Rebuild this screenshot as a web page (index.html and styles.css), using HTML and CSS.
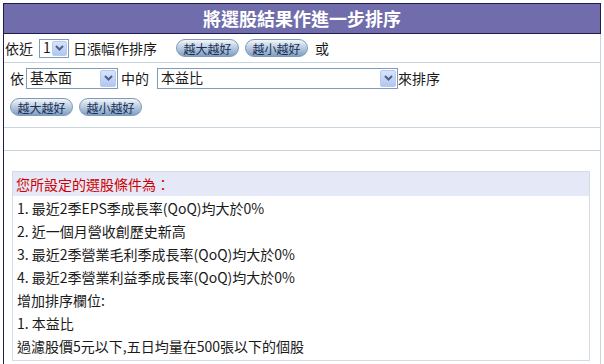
FILE: index.html
```html
<!DOCTYPE html>
<html lang="zh-Hant">
<head>
    <meta charset="UTF-8">
    <title>將選股結果作進一步排序</title>
    <link rel="stylesheet" href="styles.css">
</head>
<body>
    <div class="wrap">
        <div class="title">將選股結果作進一步排序</div>

        <div class="cell row-days">
            <span>依近</span>
            <div class="combo combo-days">
                <span class="val">1</span>
                <span class="arrow"><svg width="9" height="6" viewBox="0 0 9 6"><path d="M1 1 L4.5 4.5 L8 1" fill="none" stroke="#4d6185" stroke-width="2"/></svg></span>
            </div>
            <span class="lbl-days">日漲幅作排序</span>
            <button class="pill first">越大越好</button>
            <button class="pill">越小越好</button>
            <span class="or">或</span>
        </div>

        <div class="cell row-field">
            <div class="line">
                <span>依</span>
                <div class="combo combo-group">
                    <span class="val">基本面</span>
                    <span class="arrow"><svg width="9" height="6" viewBox="0 0 9 6"><path d="M1 1 L4.5 4.5 L8 1" fill="none" stroke="#4d6185" stroke-width="2"/></svg></span>
                </div>
                <span class="mid">中的</span>
                <div class="combo combo-item">
                    <span class="val">本益比</span>
                    <span class="arrow"><svg width="9" height="6" viewBox="0 0 9 6"><path d="M1 1 L4.5 4.5 L8 1" fill="none" stroke="#4d6185" stroke-width="2"/></svg></span>
                </div>
                <span>來排序</span>
            </div>
            <div class="btns">
                <button class="pill">越大越好</button>
                <button class="pill">越小越好</button>
            </div>
        </div>

        <div class="cell blank"></div>

        <div class="cell last">
            <div class="cond">
                <div class="cond-head">您所設定的選股條件為：</div>
                <ul class="cond-list">
                    <li>1. 最近2季EPS季成長率(QoQ)均大於0%</li>
                    <li>2. 近一個月營收創歷史新高</li>
                    <li>3. 最近2季營業毛利季成長率(QoQ)均大於0%</li>
                    <li>4. 最近2季營業利益季成長率(QoQ)均大於0%</li>
                    <li>增加排序欄位:</li>
                    <li>1. 本益比</li>
                    <li>過濾股價5元以下,五日均量在500張以下的個股</li>
                </ul>
            </div>
        </div>
    </div>
</body>
</html>
```

FILE: styles.css
```css
body {
    margin: 0;
    background: #ffffff;
    font-family: "Noto Sans CJK TC", "Liberation Sans", sans-serif;
    font-size: 14px;
    color: #1a1a1a;
}
.wrap {
    margin: 3px 0 0 3px;
    width: 597px;
    height: 361px;
    overflow: hidden;
    border-left: 1px solid #1c1c4e;
}
.title {
    height: 29px;
    line-height: 29px;
    background-color: #716dac;
    border-top: 1px solid #1c1c4e;
    border-right: 1px solid #1c1c4e;
    border-bottom: 1px solid #1c1c4e;
    color: #ffffff;
    font-size: 18px;
    font-weight: bold;
    text-align: center;
}
.cell {
    border-bottom: 1px solid #c9d5de;
    border-right: 1px solid #c9d5de;
}
.row-days {
    height: 28px;
    display: flex;
    align-items: center;
    padding-left: 1px;
}
.combo {
    display: flex;
    height: 19px;
    border: 1px solid #7f9db9;
    background: #ffffff;
    box-sizing: border-box;
}
.combo .val {
    flex: 1;
    padding-left: 3px;
    line-height: 15px;
    font-size: 14px;
}
.combo .arrow {
    width: 16px;
    margin: 1px;
    display: flex;
    align-items: center;
    justify-content: center;
    background: linear-gradient(#d9e4fb, #b1c6f2);
    border: 1px solid #b8cbef;
    border-radius: 2px;
    box-sizing: border-box;
}
.combo-days {
    width: 30px;
    margin-left: 6px;
}
.lbl-days {
    margin-left: 4px;
}
.pill {
    width: 63px;
    height: 18px;
    padding: 0;
    border: 1px solid #7f9aba;
    border-radius: 9px;
    background: linear-gradient(#f2f6fa 0%, #c3d3e5 40%, #7f9fc4 100%);
    color: #1b2f52;
    font-family: "Noto Sans CJK TC", sans-serif;
    font-size: 12px;
    line-height: 15px;
    cursor: pointer;
}
.pill + .pill {
    margin-left: 6px;
}
.pill.first {
    margin-left: 19px;
}
.or {
    margin-left: 7px;
}
.row-field {
    height: 60px;
    padding: 4px 0 0 6px;
}
.line {
    display: flex;
    align-items: center;
    height: 22px;
}
.combo-group {
    width: 92px;
    height: 21px;
    margin-left: 2px;
}
.combo-item {
    width: 241px;
    height: 21px;
}
.combo-group .val, .combo-item .val {
    line-height: 16px;
}
.mid {
    margin: 0 8px 0 3px;
}
.btns {
    margin: 9px 0 0 0;
    display: flex;
}
.blank {
    height: 22px;
}
.last {
    border-bottom: none;
    padding: 20px 0 0 8px;
    height: 200px;
}
.cond {
    width: 576px;
    border: 1px solid #d3dde8;
}
.cond-head {
    height: 24px;
    line-height: 24px;
    background-color: #e4e8f7;
    color: #d00000;
    padding-left: 3px;
}
.cond-list {
    list-style: none;
    margin: 0 2px 2px 2px;
    padding: 1px 0 0 2px;
    background: #ffffff;
}
.cond-list li {
    line-height: 23px;
    height: 23px;
}
```
